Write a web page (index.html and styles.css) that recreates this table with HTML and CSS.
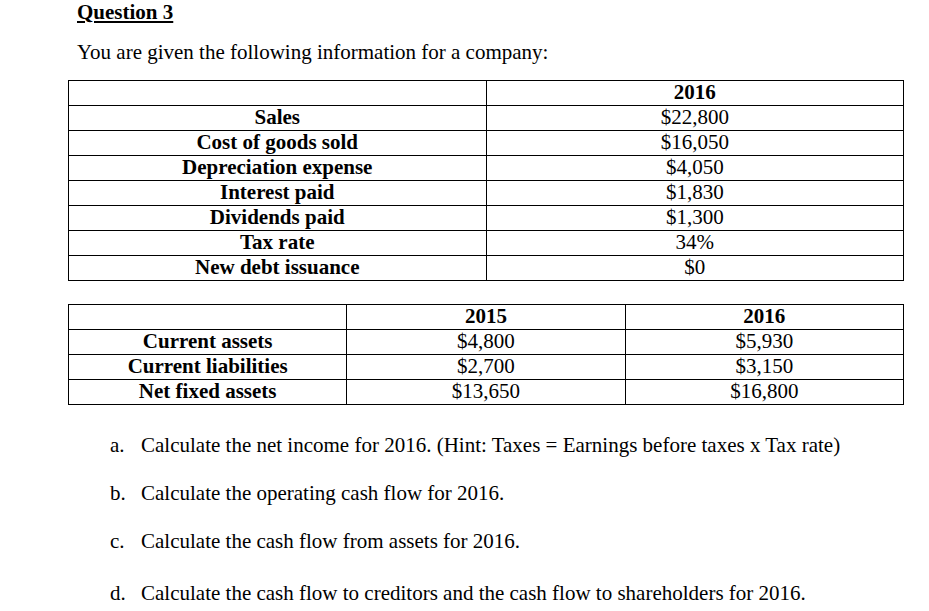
FILE: index.html
```html
<!DOCTYPE html>
<html lang="en">
<head>
<meta charset="utf-8">
<title>Question 3</title>
<link rel="stylesheet" href="styles.css">
</head>
<body>
<main class="page">
  <h1 class="title">Question 3</h1>
  <p class="intro">You are given the following information for a company:</p>

  <table class="data data-two">
    <tr class="head"><td></td><td>2016</td></tr>
    <tr><td class="label">Sales</td><td>$22,800</td></tr>
    <tr><td class="label">Cost of goods sold</td><td>$16,050</td></tr>
    <tr><td class="label">Depreciation expense</td><td>$4,050</td></tr>
    <tr><td class="label">Interest paid</td><td>$1,830</td></tr>
    <tr><td class="label">Dividends paid</td><td>$1,300</td></tr>
    <tr><td class="label">Tax rate</td><td>34%</td></tr>
    <tr><td class="label">New debt issuance</td><td>$0</td></tr>
  </table>

  <table class="data data-three">
    <tr class="head"><td></td><td>2015</td><td>2016</td></tr>
    <tr><td class="label">Current assets</td><td>$4,800</td><td>$5,930</td></tr>
    <tr><td class="label">Current liabilities</td><td>$2,700</td><td>$3,150</td></tr>
    <tr><td class="label">Net fixed assets</td><td>$13,650</td><td>$16,800</td></tr>
  </table>

  <ol class="tasks">
    <li class="task"><span class="marker">a.</span><span>Calculate the net income for 2016. (Hint: Taxes = Earnings before taxes x Tax rate)</span></li>
    <li class="task"><span class="marker">b.</span><span>Calculate the operating cash flow for 2016.</span></li>
    <li class="task"><span class="marker">c.</span><span>Calculate the cash flow from assets for 2016.</span></li>
    <li class="task task-last"><span class="marker">d.</span><span>Calculate the cash flow to creditors and the cash flow to shareholders for 2016.</span></li>
  </ol>
</main>
</body>
</html>
```

FILE: styles.css
```css
html, body {
  margin: 0;
  padding: 0;
  background: #ffffff;
}

body {
  font-family: "Liberation Serif", "Times New Roman", serif;
  color: #000000;
  font-size: 21px;
}

.page {
  padding-left: 68px;
}

.title {
  margin: 0;
  padding-left: 9px;
  font-size: 21px;
  font-weight: bold;
  line-height: 24px;
  text-decoration: underline;
  text-decoration-thickness: 2px;
  text-underline-offset: 2px;
}

.intro {
  margin: 16px 0 0;
  padding-left: 9px;
  line-height: 24px;
}

.data {
  border-collapse: collapse;
  width: 836px;
  table-layout: fixed;
}

.data-two {
  margin-top: 16px;
}

.data-three {
  margin-top: 23px;
}

.data td {
  border: 1px solid #000000;
  padding: 0 0 2px;
  line-height: 22px;
  text-align: center;
  white-space: nowrap;
}

.data .head td,
.data .label {
  font-weight: bold;
}

.tasks {
  list-style: none;
  margin: 28px 0 0;
  padding: 0 0 0 42px;
}

.task {
  display: flex;
  line-height: 24px;
  margin-bottom: 24px;
}

.task-last {
  padding-top: 4px;
}

.marker {
  width: 31px;
  flex: none;
}
```
